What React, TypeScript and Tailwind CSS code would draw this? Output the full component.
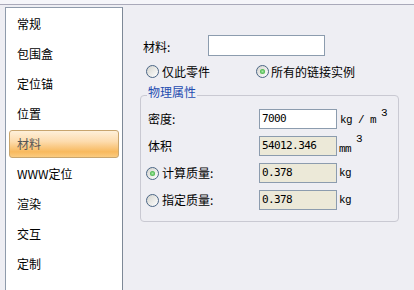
import React from "react";

const cjk = { fontFamily: '"Noto Sans CJK SC", "Noto Sans", sans-serif' };
const mono = { fontFamily: '"DejaVu Sans Mono", monospace' };
const unitFont = { fontFamily: '"Liberation Mono", monospace' };

function Radio({ checked }: { checked?: boolean }) {
  return (
    <span className="w-[13px] h-[13px] rounded-full border border-[#4a6585] bg-[linear-gradient(135deg,#d4d4ce,#ffffff)] flex items-center justify-center shrink-0">
      {checked && (
        <span className="w-[5px] h-[5px] rounded-full bg-[radial-gradient(circle,#a6eaa6,#1f9d1f)]" />
      )}
    </span>
  );
}

const items = ["常规", "包围盒", "定位锚", "位置", "材料", "WWW定位", "渲染", "交互", "定制"];

function Field({ value, disabled }: { value: string; disabled?: boolean }) {
  return (
    <div
      className={
        "w-[78px] h-[20px] border border-[#8c9cae] flex items-center pl-[2px] text-[11px] tracking-[-0.6px] text-black " +
        (disabled ? "bg-[#ece9d8]" : "bg-white")
      }
      style={mono}
    >
      {value}
    </div>
  );
}

export default function App() {
  return (
    <div
      className="w-[414px] h-[290px] bg-[#eeeef3] flex flex-col overflow-hidden text-[12px] text-black"
      style={cjk}
    >
      <div className="h-[5px] shrink-0 bg-[#f5f5f9] border-b border-[#a9a9b9]" />
      <div className="flex flex-1 min-h-0 pt-[2px]">
        <div className="ml-[5px] w-[118px] h-[300px] shrink-0 bg-white border border-[#8f9bab] border-r-[#7d8896] flex flex-col pt-px">
          {items.map((t) => {
            const sel = t === "材料";
            return (
              <div key={t} className="h-[30px] flex flex-col justify-center">
                {sel ? (
                  <div className="mx-[3px] h-[28px] rounded-[3px] border border-[#c8a56e] bg-[linear-gradient(to_bottom,#fef0da_0%,#fddcae_40%,#f8b95e_80%,#fbcb80_100%)] flex items-center pl-[7px] text-[#555555]">
                    {t}
                  </div>
                ) : (
                  <div className="pl-[11px] leading-[30px]">{t}</div>
                )}
              </div>
            );
          })}
        </div>
        <div className="flex-1 flex flex-col pl-[17px] pt-[28px]">
          <div className="flex items-center h-[21px]">
            <span className="w-[68px] pl-[3px] pt-[3px]">材料:</span>
            <div className="w-[117px] h-[21px] bg-white border border-[#8c9cae]" />
          </div>
          <div className="flex items-center h-[13px] mt-[9px]">
            <div className="w-[110px] ml-[6px] flex items-center gap-[3px]">
              <Radio />
              <span>仅此零件</span>
            </div>
            <div className="flex items-center gap-[2px]">
              <Radio checked />
              <span>所有的链接实例</span>
            </div>
          </div>
          <div className="relative mt-[17px] w-[259px] h-[127px] rounded-[4px] border border-[#c9c9d2] flex flex-col gap-[7px] pt-[13px]">
            <span className="absolute left-[6px] -top-[12px] px-[1px] bg-[#eeeef3] text-[#1f4cb0] leading-[16px]">
              物理属性
            </span>
            <div className="flex items-center h-[20px]">
              <span className="w-[118px] pl-[7px]">密度:</span>
              <Field value="7000" />
              <span className="ml-[3px] text-[11px] tracking-[-0.6px] flex items-center" style={unitFont}>
                <span className="mt-[2px]">kg / m</span>
                <span className="ml-[5px] -mt-[12px]">3</span>
              </span>
            </div>
            <div className="flex items-center h-[20px]">
              <span className="w-[118px] pl-[7px]">体积</span>
              <Field value="54012.346" disabled />
              <span className="ml-[2px] text-[11px] tracking-[-0.6px] flex items-center" style={unitFont}>
                <span className="mt-[6px]">mm</span>
                <span className="ml-[5px] -mt-[14px]">3</span>
              </span>
            </div>
            <div className="flex items-center h-[20px]">
              <div className="w-[118px] pl-[5px] flex items-center gap-[3px]">
                <Radio checked />
                <span>计算质量:</span>
              </div>
              <Field value="0.378" disabled />
              <span className="ml-[2px] text-[11px] tracking-[-0.6px]" style={unitFont}>
                kg
              </span>
            </div>
            <div className="flex items-center h-[20px]">
              <div className="w-[118px] pl-[5px] flex items-center gap-[3px]">
                <Radio />
                <span>指定质量:</span>
              </div>
              <Field value="0.378" disabled />
              <span className="ml-[2px] text-[11px] tracking-[-0.6px]" style={unitFont}>
                kg
              </span>
            </div>
          </div>
        </div>
      </div>
    </div>
  );
}
